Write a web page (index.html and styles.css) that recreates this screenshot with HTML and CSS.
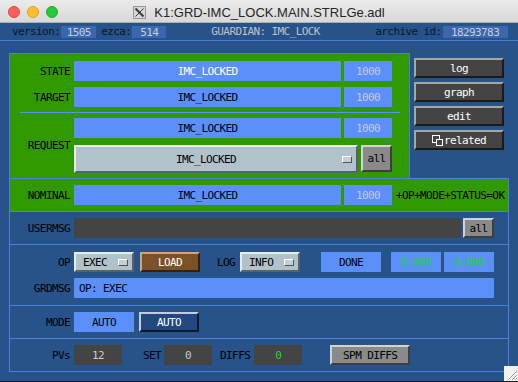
FILE: index.html
```html
<!doctype html>
<html>
<head>
<meta charset="utf-8">
<title>K1:GRD-IMC_LOCK.MAIN.STRLGe.adl</title>
<link rel="stylesheet" href="styles.css">
</head>
<body>
<div id="window">
  <div class="titlebar">
    <div class="lights">
      <span class="light close"></span>
      <span class="light minimize"></span>
      <span class="light zoom"></span>
    </div>
    <div class="title">
      <svg class="xicon" width="13" height="13" viewBox="0 0 13 13">
        <rect x="0.5" y="0.5" width="12" height="12" fill="#d6d6d6" stroke="#9a9a9a"/>
        <path d="M2.5 2.5 L10.5 10.5" stroke="#3a3a3a" stroke-width="2"/>
        <path d="M10.5 2.5 L2.5 10.5" stroke="#3a3a3a" stroke-width="1"/>
      </svg>
      <span>K1:GRD-IMC_LOCK.MAIN.STRLGe.adl</span>
    </div>
    <div></div>
  </div>

  <div class="infobar">
    <span class="key key-version">version:</span><span class="val val-version">1505</span>
    <span class="key key-ezca">ezca:</span><span class="val val-ezca">514</span>
    <span class="guardian">GUARDIAN: IMC_LOCK</span>
    <span class="key">archive id:</span><span class="val val-archive">18293783</span>
  </div>

  <div id="screen">
    <div class="top">
      <div class="cmdpanel">
        <div class="row row-state">
          <span class="label">STATE</span>
          <span class="field field-white">IMC_LOCKED</span>
          <span class="num">1000</span>
        </div>
        <div class="row row-target">
          <span class="label">TARGET</span>
          <span class="field">IMC_LOCKED</span>
          <span class="num">1000</span>
        </div>
        <div class="divider"></div>
        <div class="row row-request">
          <span class="label">REQUEST</span>
          <div class="request-controls">
            <div class="row">
              <span class="field">IMC_LOCKED</span>
              <span class="num">1000</span>
            </div>
            <div class="row">
              <span class="menu menu-request"><span class="menu-text">IMC_LOCKED</span><span class="menu-mark"></span></span>
              <span class="btn-gray btn-all-request">all</span>
            </div>
          </div>
        </div>
      </div>

      <ul class="sidebuttons">
        <li class="sidebtn">log</li>
        <li class="sidebtn">graph</li>
        <li class="sidebtn">edit</li>
        <li class="sidebtn">
          <svg class="related-icon" width="11" height="11" viewBox="0 0 11 11">
            <rect x="0.5" y="0.5" width="7" height="7" fill="none" stroke="#fff"/>
            <rect x="4.5" y="4.5" width="6" height="6" fill="#444" stroke="#fff"/>
          </svg>related
        </li>
      </ul>
    </div>

    <div class="frame">
      <div class="section section-nominal">
        <div class="row">
          <span class="label">NOMINAL</span>
          <span class="field">IMC_LOCKED</span>
          <span class="num">1000</span>
          <span class="status">+OP+MODE+STATUS=OK</span>
        </div>
      </div>

      <div class="section section-usermsg">
        <div class="row">
          <span class="label">USERMSG</span>
          <span class="darkfield usermsg"></span>
          <span class="btn-gray btn-all-msg">all</span>
        </div>
      </div>

      <div class="section section-op">
        <div class="row">
          <span class="label">OP</span>
          <span class="menu menu-small"><span class="menu-text">EXEC</span><span class="menu-mark"></span></span>
          <span class="btn-load">LOAD</span>
          <span class="inline-label log-label">LOG</span>
          <span class="menu menu-small"><span class="menu-text">INFO</span><span class="menu-mark"></span></span>
          <span class="field field-done">DONE</span>
          <span class="field field-time">0.000</span>
          <span class="field field-time field-time2">0.000</span>
        </div>
        <div class="row row-grdmsg">
          <span class="label">GRDMSG</span>
          <span class="field field-grdmsg">OP: EXEC</span>
        </div>
      </div>

      <div class="section section-mode">
        <div class="row">
          <span class="label">MODE</span>
          <span class="field field-mode">AUTO</span>
          <span class="btn-auto">AUTO</span>
        </div>
      </div>

      <div class="section section-pvs">
        <div class="row">
          <span class="label">PVs</span>
          <span class="darkfield pvbox">12</span>
          <span class="inline-label set-label">SET</span>
          <span class="darkfield pvbox">0</span>
          <span class="inline-label diffs-label">DIFFS</span>
          <span class="darkfield pvbox diffs-box">0</span>
          <span class="btn-gray btn-spm">SPM DIFFS</span>
        </div>
      </div>
    </div>
  </div>

  <svg class="grip" width="14" height="15" viewBox="0 0 14 15">
    <rect width="14" height="15" fill="#f2f2f2"/>
    <path d="M4 14 L13 5 M8 14 L13 9 M11 14 L13 12" stroke="#a0a0a0" stroke-width="1"/>
  </svg>
</div>
</body>
</html>
```

FILE: styles.css
```css
html, body {
  margin: 0;
  padding: 0;
}
body {
  width: 518px;
  height: 382px;
  overflow: hidden;
  background: #27528a;
  font-family: "DejaVu Sans Mono", monospace;
  font-size: 11px;
  letter-spacing: -0.6px;
  color: #000;
}
ul, li {
  margin: 0;
  padding: 0;
  list-style: none;
}
#window {
  position: relative;
  height: 381px;
  border-bottom: 1px solid #1c1c1c;
}

/* window chrome */
.titlebar {
  display: grid;
  grid-template-columns: 1fr auto 1fr;
  align-items: center;
  height: 20px;
  padding-top: 2px;
  background: linear-gradient(#ebebeb, #d8d8d8);
  border-bottom: 1px solid #b0b0b0;
  font-family: "Liberation Sans", Arial, sans-serif;
  font-size: 13px;
  letter-spacing: 0;
  color: #262626;
}
.lights {
  display: flex;
  gap: 7px;
  padding-left: 8px;
}
.light {
  width: 12px;
  height: 12px;
  border-radius: 50%;
  box-sizing: border-box;
}
.close {
  background: #fd5f57;
  border: 1px solid #e2463f;
}
.minimize {
  background: #febc2e;
  border: 1px solid #dea123;
}
.zoom {
  background: #28c840;
  border: 1px solid #1aab29;
}
.title {
  display: flex;
  align-items: center;
  gap: 8px;
}

/* info bar */
.infobar {
  display: flex;
  align-items: center;
  height: 17px;
  border-bottom: 1px solid #4a7cd2;
}
.key {
  color: #0c1626;
}
.key-version {
  margin-left: 12px;
}
.key-ezca {
  margin-left: 5px;
}
.val {
  height: 12px;
  line-height: 13px;
  background: #3b67ae;
  color: #c9ced8;
  text-align: center;
  margin-left: 1px;
}
.val-version {
  width: 35px;
}
.val-ezca {
  width: 34px;
}
.val-archive {
  width: 65px;
}
.guardian {
  width: 164px;
  margin-left: 45px;
  color: #b9c2ce;
}

/* screen */
#screen {
  padding: 12px 0 0 9px;
}
.top {
  display: flex;
  align-items: flex-start;
}
.cmdpanel {
  width: 399px;
  height: 117px;
  padding-top: 7px;
  background: #319900;
  border: 1px solid #4c7fd8;
  border-bottom: 0;
}
.row {
  display: flex;
  align-items: center;
}
.label {
  flex: none;
  width: 60px;
  margin-right: 4px;
  text-align: right;
}
.field {
  flex: none;
  display: flex;
  align-items: center;
  justify-content: center;
  width: 267px;
  height: 20px;
  background: #5b8ffa;
}
.field-white {
  color: #fff;
}
.num {
  flex: none;
  display: flex;
  align-items: center;
  justify-content: center;
  width: 48px;
  height: 20px;
  margin-left: 3px;
  background: #5b8ffa;
  color: #c6cbdb;
}
.row-target {
  margin-top: 6px;
}
.divider {
  width: 380px;
  height: 1px;
  margin: 5px 0 5px 10px;
  background: #5b8ffa;
}
.request-controls {
  display: flex;
  flex-direction: column;
  gap: 7px;
}
.menu {
  flex: none;
  display: flex;
  align-items: center;
  box-sizing: border-box;
  height: 20px;
  background: #b0c3cb;
  border: 2px solid;
  border-color: #e8eef0 #5a6268 #5a6268 #e8eef0;
}
.menu-text {
  flex: 1;
}
.menu-mark {
  width: 10px;
  height: 7px;
  box-sizing: border-box;
  margin-right: 4px;
  background: #c4d0d6;
  border: 1px solid;
  border-color: #ffffff #4e5458 #4e5458 #ffffff;
}
.menu-request {
  width: 284px;
  height: 28px;
}
.menu-request .menu-text {
  text-align: center;
  margin-right: 6px;
}
.menu-small {
  width: 60px;
}
.menu-small .menu-text {
  padding-left: 7px;
}
.btn-gray {
  flex: none;
  display: flex;
  align-items: center;
  justify-content: center;
  box-sizing: border-box;
  background: #8a8a8a;
  border: 2px solid;
  border-color: #d2d2d2 #3e3e3e #3e3e3e #d2d2d2;
}
.btn-all-request {
  width: 31px;
  height: 27px;
  margin-left: 3px;
  align-self: flex-start;
}

/* side buttons */
.sidebuttons {
  display: flex;
  flex-direction: column;
  gap: 4px;
  width: 90px;
  margin: 5px 0 0 4px;
}
.sidebtn {
  display: flex;
  align-items: center;
  justify-content: center;
  box-sizing: border-box;
  height: 20px;
  background: #444;
  color: #fff;
  border: 2px solid;
  border-color: #a6a6a6 #1a1a1a #1a1a1a #a6a6a6;
}
.related-icon {
  margin-right: 1px;
}

/* lower frame */
.frame {
  width: 498px;
  border: 1px solid #4c7fd8;
  border-bottom: 0;
}
.section {
  box-sizing: border-box;
  height: 33px;
  padding-top: 6px;
  border-bottom: 1px solid #4c7fd8;
}
.section-nominal {
  background: #319900;
}
.status {
  margin-left: 4px;
}
.darkfield {
  flex: none;
  display: flex;
  align-items: center;
  justify-content: center;
  height: 20px;
  background: #444;
  color: #cacaca;
}
.usermsg {
  width: 387px;
}
.btn-all-msg {
  width: 31px;
  height: 20px;
  margin-left: 2px;
}
.section-op {
  height: 61px;
  padding-top: 7px;
}
.btn-load {
  flex: none;
  display: flex;
  align-items: center;
  justify-content: center;
  box-sizing: border-box;
  width: 60px;
  height: 20px;
  margin-left: 6px;
  background: #7b5228;
  color: #fff;
  border: 2px solid;
  border-color: #c9a77f #35210d #35210d #c9a77f;
}
.inline-label {
  flex: none;
}
.log-label {
  margin: 0 5px 0 17px;
}
.field-done {
  width: 60px;
  margin-left: 21px;
}
.field-time {
  width: 50px;
  margin-left: 10px;
  color: #1fd81f;
}
.field-time2 {
  margin-left: 3px;
}
.row-grdmsg {
  margin-top: 6px;
}
.field-grdmsg {
  width: 420px;
  justify-content: flex-start;
  padding-left: 5px;
  box-sizing: border-box;
}
.field-mode {
  width: 60px;
}
.btn-auto {
  flex: none;
  display: flex;
  align-items: center;
  justify-content: center;
  box-sizing: border-box;
  width: 60px;
  height: 20px;
  margin-left: 5px;
  background: #22487e;
  color: #fff;
  border: 2px solid;
  border-color: #c3ccda #0c1a30 #0c1a30 #c3ccda;
}
.pvbox {
  width: 48px;
}
.set-label {
  margin: 0 3px 0 21px;
}
.diffs-label {
  margin: 0 4px 0 8px;
}
.diffs-box {
  color: #1fd81f;
}
.btn-spm {
  width: 80px;
  height: 20px;
  margin-left: 28px;
}
.grip {
  position: absolute;
  right: 0;
  bottom: 0;
}
```
